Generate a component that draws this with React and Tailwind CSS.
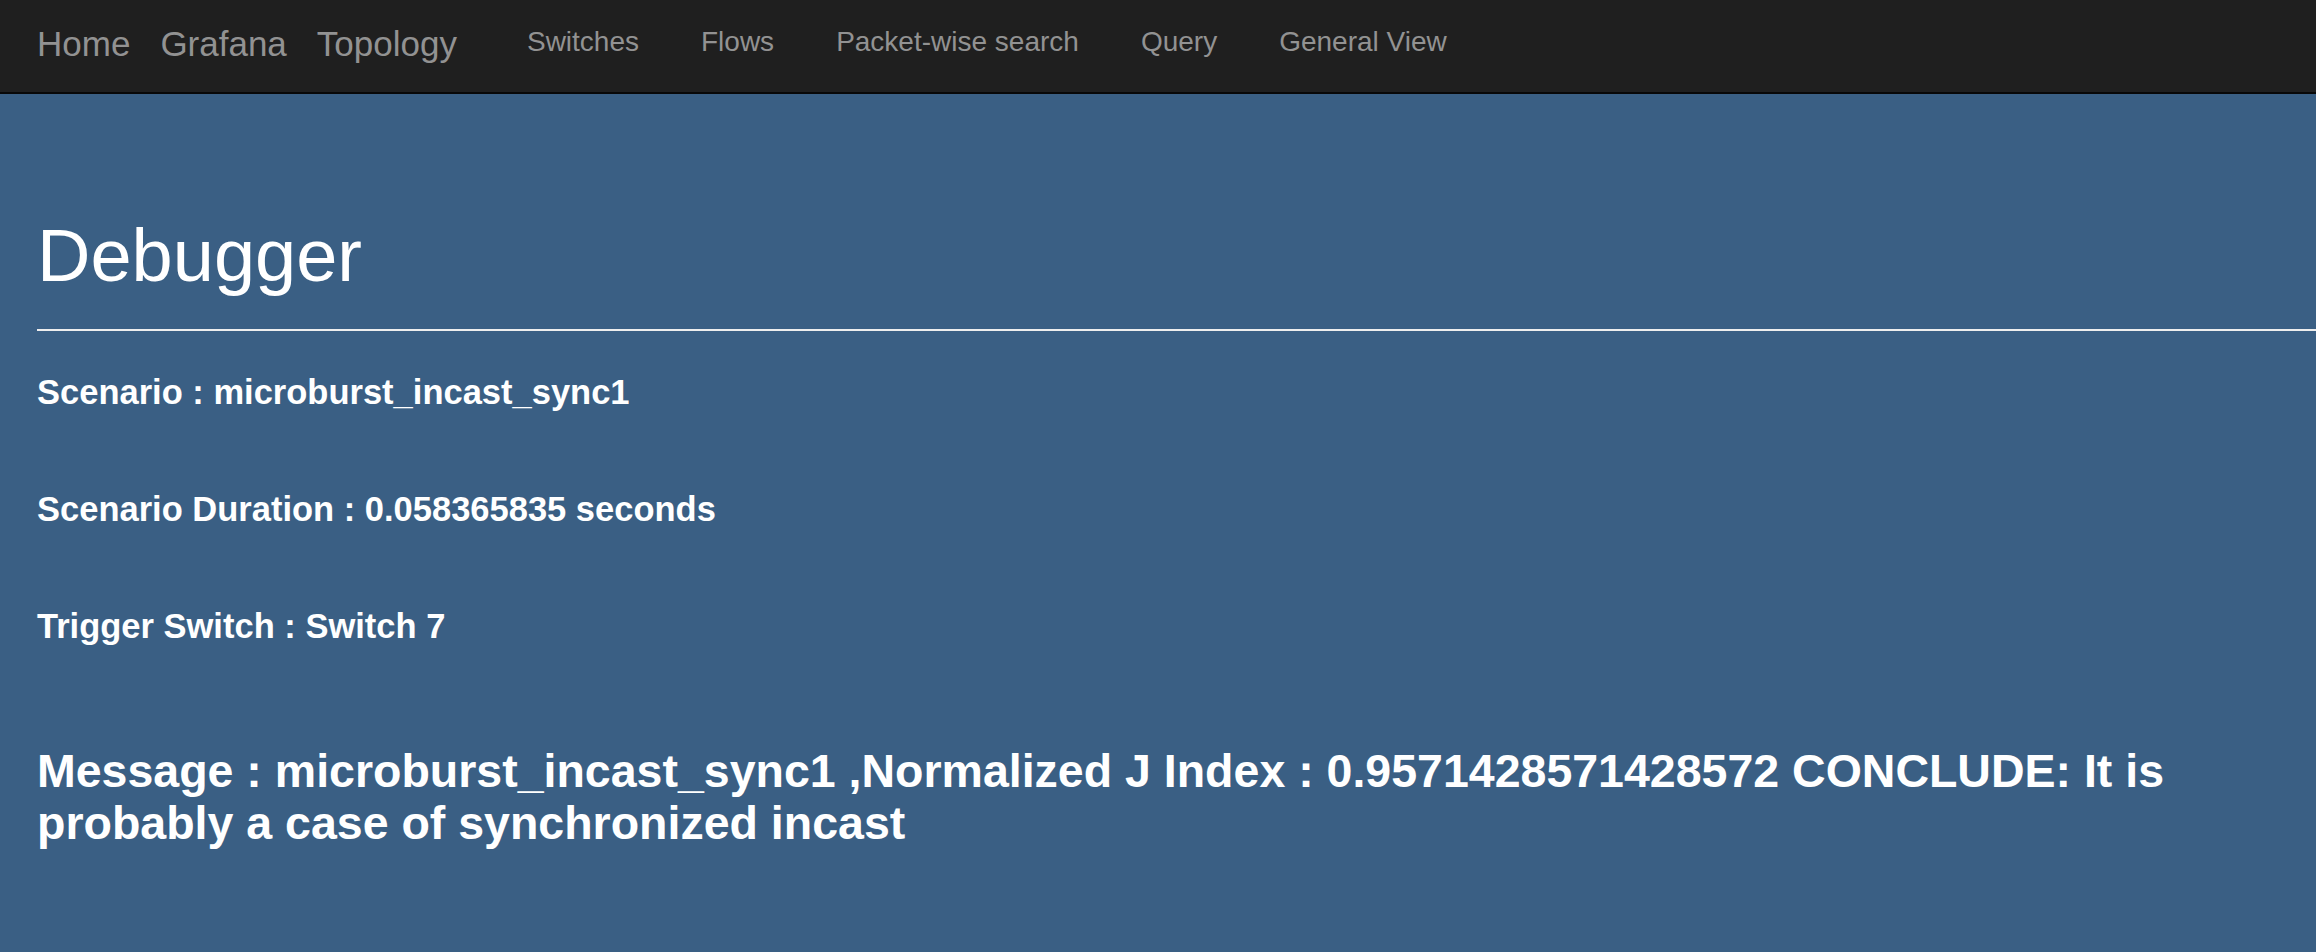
const BRAND_LINKS = ["Home", "Grafana", "Topology"];
const NAV_LINKS = ["Switches", "Flows", "Packet-wise search", "Query", "General View"];

const DETAILS = [
  { label: "Scenario", value: "microburst_incast_sync1" },
  { label: "Scenario Duration", value: "0.058365835 seconds" },
  { label: "Trigger Switch", value: "Switch 7" },
];

const MESSAGE =
  "microburst_incast_sync1 ,Normalized J Index : 0.9571428571428572 CONCLUDE: It is probably a case of synchronized incast";

function Navbar() {
  return (
    <nav className="flex h-[94px] items-center border-b-2 border-[#080808] bg-[#1f1f1f] pb-[6px] pl-[37px]">
      <div className="flex items-center gap-[30px]">
        {BRAND_LINKS.map((link) => (
          <a key={link} href="#" className="text-[35px] leading-none text-[#929292]">
            {link}
          </a>
        ))}
      </div>
      <ul className="ml-[70px] flex items-center gap-[62px]">
        {NAV_LINKS.map((link) => (
          <li key={link}>
            <a href="#" className="text-[28px] leading-none text-[#929292]">
              {link}
            </a>
          </li>
        ))}
      </ul>
    </nav>
  );
}

export default function App() {
  return (
    <div className="flex min-h-screen flex-col bg-[#3a5f84] font-['Liberation_Sans',Arial,sans-serif]">
      <Navbar />
      <main className="pl-[37px] pt-[121px] text-white">
        <h1 className="text-[74px] font-normal leading-[1.1]">Debugger</h1>
        <hr className="mt-[33px] border-t-2 border-[#eeeeee]" />
        <div className="mt-[42px] flex flex-col gap-[79px]">
          {DETAILS.map((item) => (
            <h4 key={item.label} className="text-[34.5px] font-bold leading-[38px]">
              {item.label} : {item.value}
            </h4>
          ))}
        </div>
        <h3 className="mt-[100px] pr-[20px] text-[46.5px] font-bold leading-[52px]">
          Message : {MESSAGE}
        </h3>
      </main>
    </div>
  );
}
